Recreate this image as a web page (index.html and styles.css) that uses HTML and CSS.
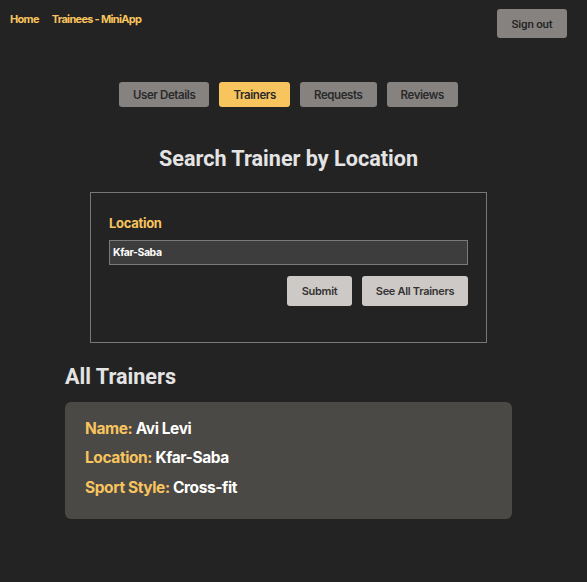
FILE: index.html
```html
<!DOCTYPE html>
<html lang="en">
<head>
<meta charset="utf-8">
<title>Trainees - MiniApp</title>
<link rel="stylesheet" href="styles.css">
</head>
<body>
<div class="page">
  <header class="topbar">
    <nav class="links">
      <a class="link" href="#">Home</a>
      <a class="link" href="#">Trainees - MiniApp</a>
    </nav>
    <button class="signout">Sign out</button>
  </header>
  <div class="tabs">
    <button class="tab">User Details</button>
    <button class="tab active">Trainers</button>
    <button class="tab">Requests</button>
    <button class="tab">Reviews</button>
  </div>
  <h1 class="title">Search Trainer by Location</h1>
  <form class="search">
    <label class="label">Location</label>
    <div class="input">Kfar-Saba</div>
    <div class="actions">
      <button class="btn btn-submit" type="button">Submit</button>
      <button class="btn btn-all" type="button">See All Trainers</button>
    </div>
  </form>
  <section class="results">
    <h2 class="subtitle">All Trainers</h2>
    <div class="card">
      <p class="row"><span class="key">Name:</span> Avi Levi</p>
      <p class="row"><span class="key">Location:</span> Kfar-Saba</p>
      <p class="row"><span class="key">Sport Style:</span> Cross-fit</p>
    </div>
  </section>
</div>
</body>
</html>
```
FILE: styles.css
```css
* { box-sizing: border-box; }
html, body { margin: 0; padding: 0; }
body {
  background: #232323;
  font-family: Inter, "Noto Sans", sans-serif;
  height: 582px;
  overflow: hidden;
}
.page {
  width: 577px;
  display: flex;
  flex-direction: column;
  align-items: center;
}
.topbar {
  width: 100%;
  display: flex;
  justify-content: space-between;
  align-items: flex-start;
  padding: 9px 10px 0 10px;
}
.links {
  display: flex;
  gap: 13px;
  padding-top: 3px;
}
.link {
  color: #f8c45e;
  font-size: 11px;
  font-weight: 700;
  text-decoration: none;
  letter-spacing: -0.7px;
}
.signout {
  width: 70px;
  height: 29px;
  border: none;
  border-radius: 3px;
  background: #858280;
  color: #222;
  font-family: Roboto, sans-serif;
  font-weight: 500;
  font-size: 11.5px;
  letter-spacing: -0.2px;
  padding: 0;
}
.tabs {
  display: flex;
  gap: 10px;
  margin-top: 44px;
}
.tab {
  height: 25px;
  border: none;
  border-radius: 3px;
  background: #858280;
  color: #2a2a2a;
  font-family: Inter, sans-serif;
  font-weight: 600;
  font-size: 11.5px;
  letter-spacing: -0.4px;
  padding: 0 14px;
}
.tab.active { background: #f8c45e; }
.title {
  margin: 38px 0 0;
  font-family: Roboto, sans-serif;
  font-weight: 700;
  font-size: 21.6px;
  color: #e4e4e4;
  line-height: 28px;
}
.search {
  margin-top: 19px;
  width: 397px;
  height: 151px;
  border: 1px solid #777;
  padding: 22px 18px 0;
  display: flex;
  flex-direction: column;
}
.label {
  color: #f8c45e;
  font-weight: 700;
  font-size: 13px;
  line-height: 16px;
  letter-spacing: -0.3px;
}
.input {
  margin-top: 9px;
  height: 25px;
  background: #3d3d3d;
  border: 1px solid #7a7a7a;
  color: #fff;
  font-weight: 700;
  font-size: 10.5px;
  line-height: 23px;
  padding-left: 3px;
  letter-spacing: -0.4px;
}
.actions {
  display: flex;
  justify-content: flex-end;
  gap: 10px;
  margin-top: 11px;
}
.btn {
  height: 30px;
  border: none;
  border-radius: 3px;
  background: #cdc9c6;
  color: #333;
  font-family: Inter, sans-serif;
  font-weight: 600;
  font-size: 11px;
  letter-spacing: -0.3px;
  padding: 0;
}
.btn-submit { width: 65px; }
.btn-all { width: 106px; }
.results {
  width: 447px;
  margin-top: 20px;
}
.subtitle {
  margin: 0;
  font-family: Roboto, sans-serif;
  font-weight: 700;
  font-size: 21.6px;
  line-height: 28px;
  color: #e4e4e4;
}
.card {
  margin-top: 11px;
  height: 117px;
  background: #4b4945;
  border-radius: 6px;
  padding: 12px 20px;
}
.row {
  margin: 0;
  color: #fff;
  font-weight: 700;
  font-size: 15.5px;
  line-height: 29.4px;
  letter-spacing: -0.4px;
}
.key { color: #f8c45e; }
```
